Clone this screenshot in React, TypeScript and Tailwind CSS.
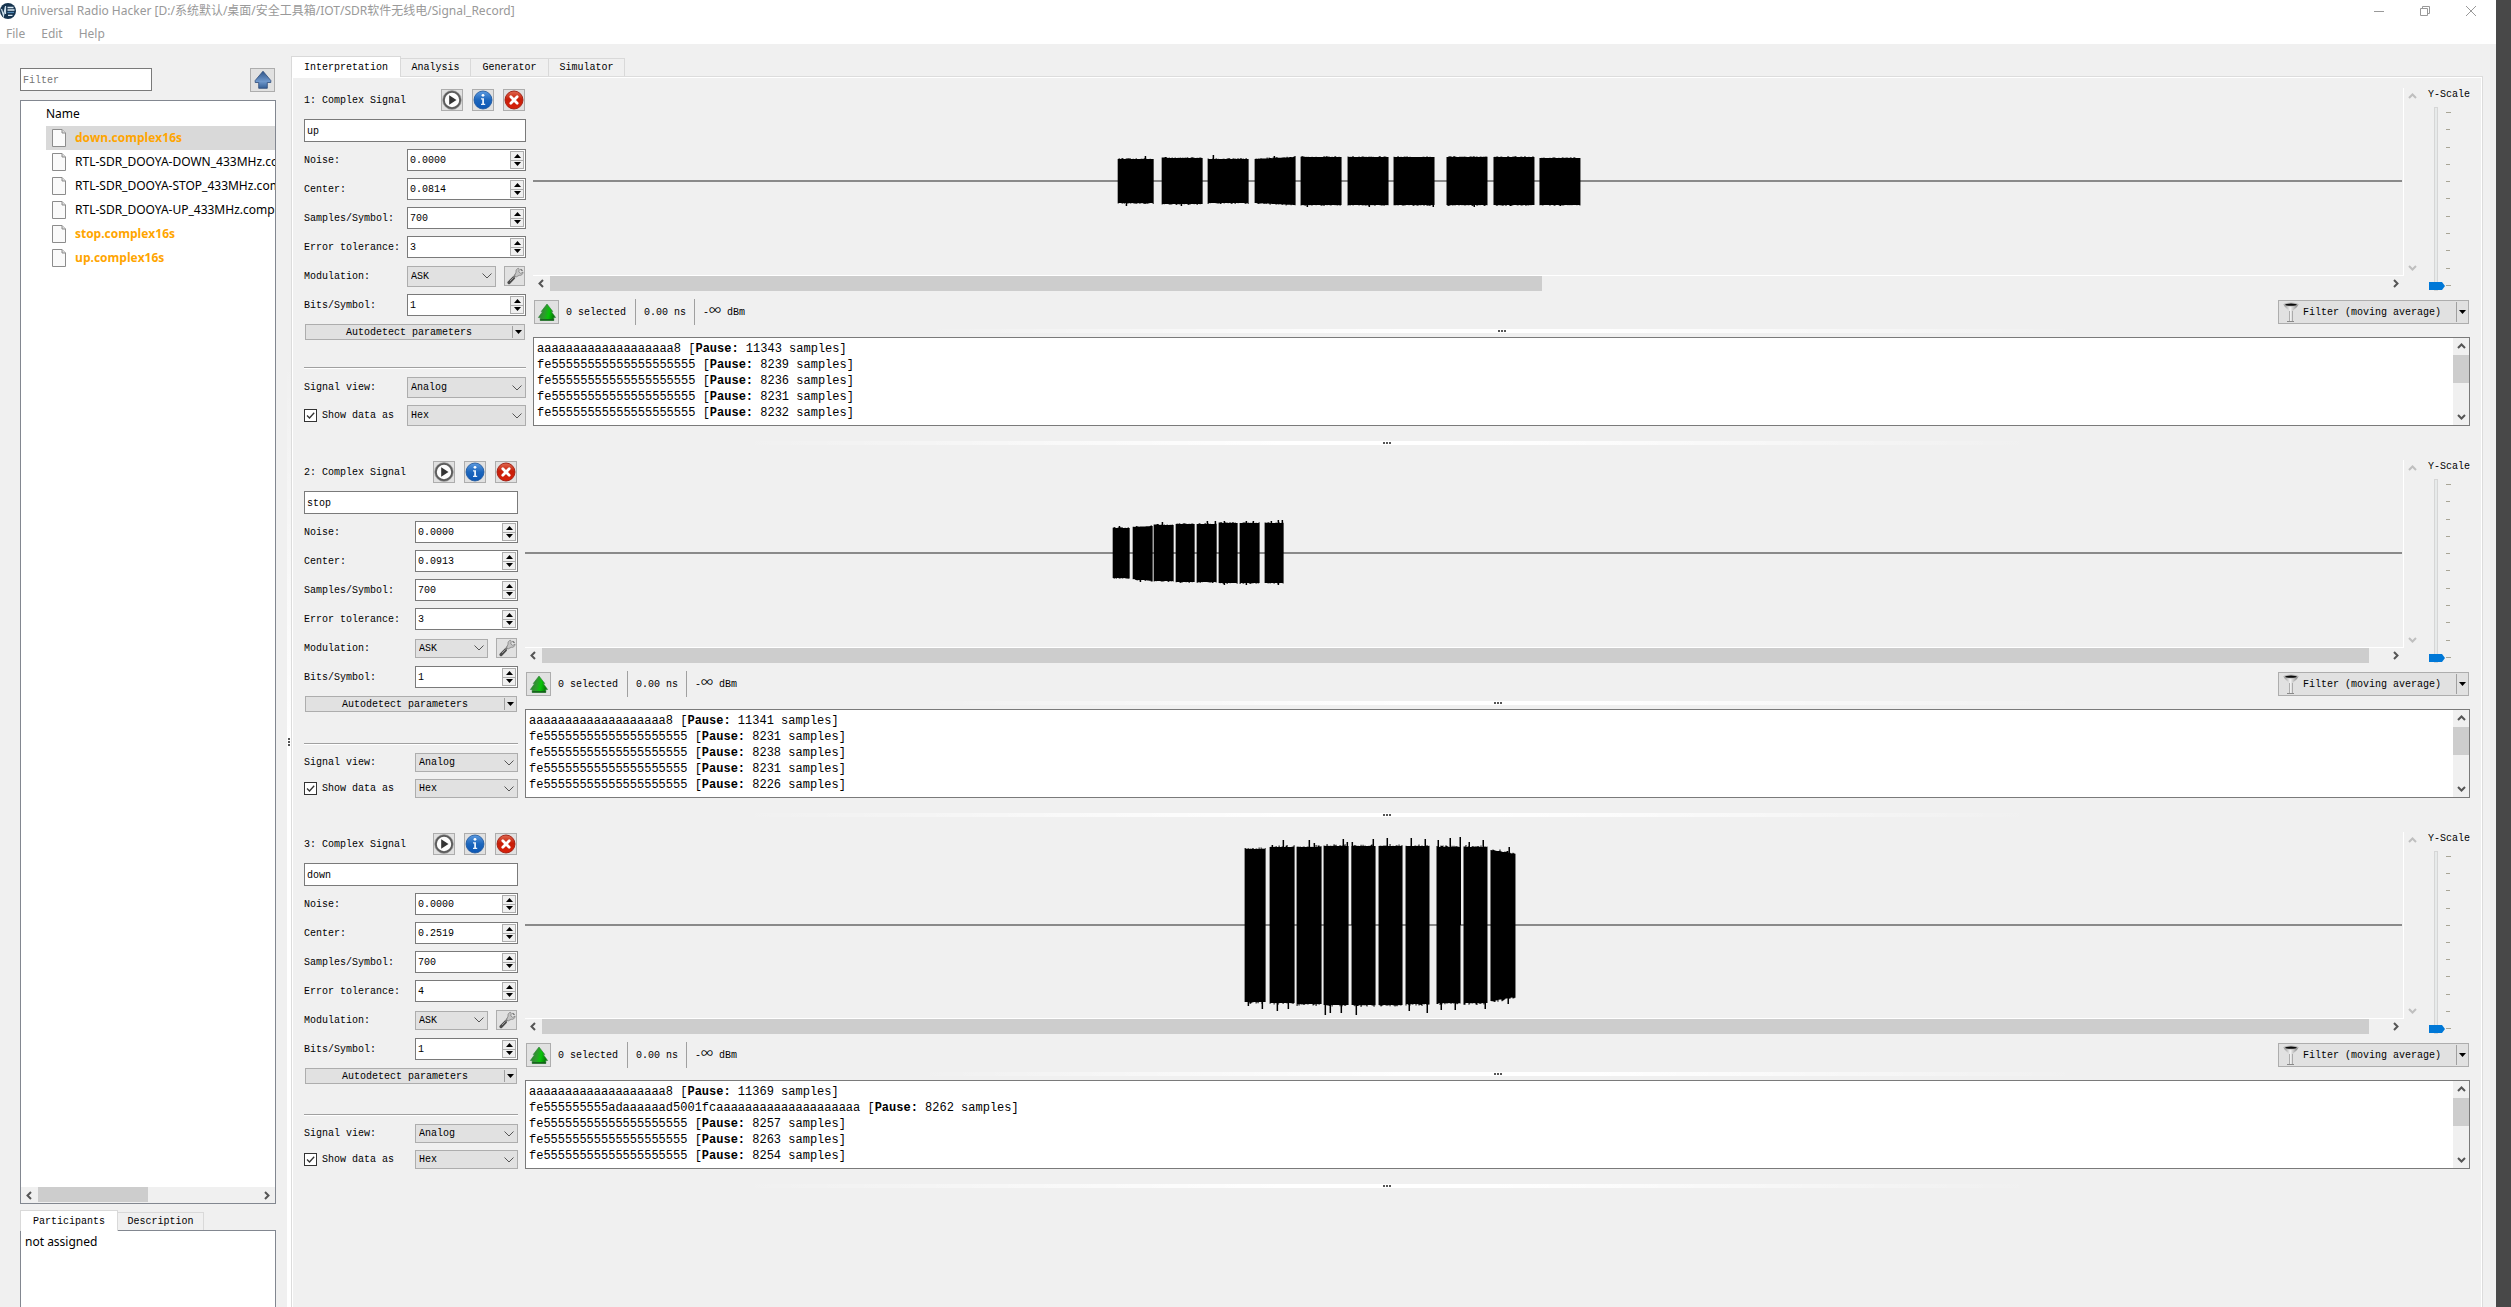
import React, { useId } from "react";

type Burst = [x0: number, x1: number, top: number, bottom: number, topEnd?: number, bottomEnd?: number];
type Spike = [x: number, y: number];

interface Signal {
  index: number;
  name: string;
  center: string;
  tolerance: string;
  roomy: boolean;
  graphWidth: number;
  tall: boolean;
  thumb: number;
  lines: [data: string, pause: number][];
  bursts: Burst[];
  spikes: Spike[];
  jitter: number;
}

const FIVES = "fe55555555555555555555";
const PREAMBLE = "aaaaaaaaaaaaaaaaaaa8";

const signals: Signal[] = [
  {
    index: 1,
    name: "up",
    center: "0.0814",
    tolerance: "3",
    roomy: true,
    graphWidth: 1871,
    tall: true,
    thumb: 54,
    lines: [[PREAMBLE, 11343], [FIVES, 8239], [FIVES, 8236], [FIVES, 8231], [FIVES, 8232]],
    bursts: [
      [585, 621, 71, 115], [629, 670, 70, 116], [675, 716, 71, 115], [722, 763, 71, 115, 69, 117],
      [768, 809, 69, 117], [815, 856, 69, 117], [861, 902, 69, 117], [914, 955, 69, 117],
      [961, 1002, 69, 117], [1007, 1048, 70, 117],
    ],
    spikes: [[612, 68], [680, 67], [593, 118], [648, 118], [741, 68], [774, 119], [836, 119], [900, 119], [941, 119], [1027, 118]],
    jitter: 1,
  },
  {
    index: 2,
    name: "stop",
    center: "0.0913",
    tolerance: "3",
    roomy: false,
    graphWidth: 1879,
    tall: true,
    thumb: 99,
    lines: [[PREAMBLE, 11341], [FIVES, 8231], [FIVES, 8238], [FIVES, 8231], [FIVES, 8226]],
    bursts: [
      [588, 605, 68, 118], [608, 628, 67, 119, 66, 121], [629, 649, 65, 121], [651, 670, 64, 122],
      [672, 692, 64, 122], [694, 713, 63, 123], [715, 735, 63, 123], [740, 759, 63, 123],
    ],
    spikes: [[594, 66], [637, 62], [682, 61], [690, 61], [699, 61], [721, 61], [728, 61], [746, 61], [753, 60], [757, 60], [615, 122], [699, 125], [721, 125], [753, 125]],
    jitter: 1,
  },
  {
    index: 3,
    name: "down",
    center: "0.2519",
    tolerance: "4",
    roomy: false,
    graphWidth: 1879,
    tall: false,
    thumb: 99,
    lines: [
      [PREAMBLE, 11369],
      ["fe555555555adaaaaaad5001fcaaaaaaaaaaaaaaaaaaaa", 8262],
      [FIVES, 8257],
      [FIVES, 8263],
      [FIVES, 8254],
    ],
    bursts: [
      [720, 741, 17, 170], [745, 770, 15, 171], [772, 797, 15, 172], [799, 824, 14, 173],
      [827, 851, 14, 173], [854, 878, 14, 173], [881, 905, 14, 172], [912, 936, 15, 171],
      [939, 963, 15, 171], [966, 991, 18, 169, 22, 165],
    ],
    spikes: [
      [758, 8], [747, 13], [784, 8], [789, 11], [818, 7], [822, 10], [827, 10], [848, 7], [862, 6], [886, 6],
      [900, 7], [913, 8], [925, 6], [935, 5], [944, 10], [958, 8], [984, 15], [723, 174], [737, 177], [752, 179],
      [763, 177], [800, 183], [805, 181], [816, 181], [831, 183], [884, 179], [902, 181], [916, 178], [930, 178],
      [960, 177], [983, 172],
    ],
    jitter: 2,
  },
];

function noise(n: number) {
  const v = Math.sin(n * 12.9898) * 43758.5453;
  return v - Math.floor(v);
}

function burstPath([x0, x1, top, bottom, topEnd = top, bottomEnd = bottom]: Burst, jitter: number) {
  const up: string[] = [];
  const down: string[] = [];
  for (let x = x0; x < x1; x++) {
    const t = (x - x0) / (x1 - x0);
    const yt = top + (topEnd - top) * t - Math.pow(noise(x), 3) * jitter;
    const yb = bottom + (bottomEnd - bottom) * t + Math.pow(noise(x + 500), 3) * jitter;
    up.push(`L${x} ${yt.toFixed(1)}H${x + 1}`);
    down.unshift(`L${x + 1} ${yb.toFixed(1)}H${x}`);
  }
  return `M${x0} 93${up.join("")}${down.join("")}Z`;
}

function Waveform({ s }: { s: Signal }) {
  const h = s.tall ? 187 : 186;
  return (
    <svg
      className={`block w-full ${s.tall ? "h-[187px]" : "h-[186px]"}`}
      viewBox={`0 0 ${s.graphWidth} ${h}`}
      preserveAspectRatio="none"
      role="img"
      aria-label={`Waveform of ${s.name}`}
    >
      <rect x="0" y="92" width={s.graphWidth - 1} height="2" fill="#8a8a8a" />
      {s.bursts.map((b) => (
        <path key={b[0]} d={burstPath(b, s.jitter)} fill="#000" />
      ))}
      {s.spikes.map(([x, y]) => (
        <rect key={`${x}-${y}`} x={x} y={Math.min(y, 93)} width="1.500" height={Math.abs(93 - y)} fill="#000" />
      ))}
    </svg>
  );
}

function Chevron({ dir, className = "" }: { dir: "up" | "down" | "left" | "right"; className?: string }) {
  const d = { up: "M1 6l3.500-3.500L8 6", down: "M1 3l3.500 3.500L8 3", left: "M6 1L2.500 4.500L6 8", right: "M3 1l3.500 3.500L3 8" }[dir];
  return (
    <svg className={`h-[9px] w-[9px] shrink-0 ${className}`} viewBox="0 0 9 9" fill="none" stroke="currentColor" strokeWidth="2">
      <path d={d} />
    </svg>
  );
}

function Triangle({ up = false }: { up?: boolean }) {
  return (
    <svg className="h-1 w-[7px] shrink-0" viewBox="0 0 7 4">
      <path d={up ? "M0 4L3.500 0L7 4Z" : "M0 0L3.500 4L7 0Z"} fill="#000" />
    </svg>
  );
}

function PlayIcon() {
  return (
    <svg className="h-5 w-5" viewBox="0 0 20 20">
      <circle cx="10" cy="10" r="8.300" fill="#fdfdfd" stroke="#5c5c5c" strokeWidth="2.200" />
      <circle cx="10" cy="10" r="9.500" fill="none" stroke="#a8a8a8" strokeWidth="0.600" />
      <path d="M7.200 5.200L14.500 10L7.200 14.800Z" fill="#333" />
    </svg>
  );
}

function InfoIcon() {
  const id = useId();
  return (
    <svg className="h-5 w-5" viewBox="0 0 20 20">
      <defs>
        <linearGradient id={id} x1="0" y1="0" x2="0" y2="1">
          <stop offset="0" stopColor="#5d9be0" />
          <stop offset="0.500" stopColor="#1c66bd" />
          <stop offset="1" stopColor="#0c57b5" />
        </linearGradient>
      </defs>
      <circle cx="10" cy="10" r="9" fill={`url(#${id})`} stroke="#1a549c" strokeWidth="0.800" />
      <circle cx="10" cy="5.300" r="1.400" fill="#fff" />
      <path d="M8 8.200h3v5.600h1.200v1.200H8v-1.200h1.200V9.400H8z" fill="#e8f1fc" />
    </svg>
  );
}

function CloseIcon() {
  const id = useId();
  return (
    <svg className="h-5 w-5" viewBox="0 0 20 20">
      <defs>
        <linearGradient id={id} x1="0" y1="0" x2="0" y2="1">
          <stop offset="0" stopColor="#df6a52" />
          <stop offset="0.450" stopColor="#c81e08" />
          <stop offset="1" stopColor="#d9200a" />
        </linearGradient>
      </defs>
      <circle cx="10" cy="10" r="9" fill={`url(#${id})`} stroke="#a01c10" strokeWidth="0.900" />
      <path d="M6.800 6.800L13.200 13.200M13.200 6.800L6.800 13.200" stroke="#fff" strokeWidth="2.800" strokeLinecap="round" />
    </svg>
  );
}

function WrenchIcon() {
  return (
    <svg className="h-[18px] w-[18px]" viewBox="0 0 18 18">
      <path d="M7.500 11L3 15.600" stroke="#4d4d4d" strokeWidth="3.200" strokeLinecap="round" />
      <path d="M7.500 10.500L4 14" stroke="#9a9a9a" strokeWidth="1" />
      <path d="M10 7.500L7.500 10.500" stroke="#777" strokeWidth="2" />
      <path d="M12.600 1.300c-2 .3-3 2-2.500 3.800L8.600 8.400l1.600 1.500 3-1.600c1.900.5 3.700-.8 3.900-3.200l-2.300 1.300-2-1.500.4-2.300z" fill="#c4c4c4" stroke="#808080" strokeWidth="0.800" />
      <path d="M14.500 2.200l2 1.600" stroke="#666" strokeWidth="1.200" />
    </svg>
  );
}

function TreeArrowIcon() {
  const id = useId();
  return (
    <svg className="h-5 w-5" viewBox="0 0 20 20">
      <defs>
        <linearGradient id={id} x1="0" y1="0" x2="1" y2="0.200">
          <stop offset="0" stopColor="#2f7d2f" />
          <stop offset="0.450" stopColor="#2e9a2e" />
          <stop offset="0.700" stopColor="#07c507" />
          <stop offset="1" stopColor="#0a7a0a" />
        </linearGradient>
      </defs>
      <path d="M10 2L15.800 9.500H14.300L18.600 15.500H16.800V18.500H3.200V15.500H1.400L5.700 9.500H4.200Z" fill={`url(#${id})`} stroke="#2c7a35" strokeWidth="0.600" />
      <path d="M3.200 17.800H16.800" stroke="#165c1c" strokeWidth="1.300" />
    </svg>
  );
}

function FunnelIcon() {
  const id = useId();
  return (
    <svg className="h-5 w-4 shrink-0" viewBox="0 0 16 20">
      <defs>
        <linearGradient id={id} x1="0" y1="0" x2="1" y2="0">
          <stop offset="0" stopColor="#8c8c8c" />
          <stop offset="0.450" stopColor="#f4f4f4" />
          <stop offset="1" stopColor="#7c7c7c" />
        </linearGradient>
      </defs>
      <path d="M0.500 2.500C2 6.500 6.300 7.500 6.300 10V19.300H9.700V10C9.700 7.500 14 6.500 15.500 2.500Z" fill={`url(#${id})`} />
      <path d="M6.500 9V19M9.500 9V19" stroke="#a0a0a0" strokeWidth="0.800" />
      <ellipse cx="8" cy="2.500" rx="7.500" ry="1.900" fill="#b5b5b5" />
      <ellipse cx="8" cy="2.700" rx="5.800" ry="1.100" fill="#0a0a0a" />
      <path d="M4 19.500H11" stroke="#8a8a8a" />
    </svg>
  );
}

function UpArrowIcon() {
  const id = useId();
  return (
    <svg className="h-5 w-5" viewBox="0 0 20 20">
      <defs>
        <linearGradient id={id} x1="0" y1="0" x2="0" y2="1">
          <stop offset="0" stopColor="#2d5488" />
          <stop offset="0.600" stopColor="#6f98cc" />
          <stop offset="1" stopColor="#345f96" />
        </linearGradient>
      </defs>
      <path d="M10 1.200L17.800 10.500V12.500H14.300V18.300H5.700V12.500H2.200V10.500Z" fill={`url(#${id})`} stroke="#2c4a78" strokeWidth="0.800" />
    </svg>
  );
}

function FileIcon() {
  return (
    <svg className="h-[18px] w-[14px] shrink-0" viewBox="0 0 14 18">
      <path d="M0.500 0.500H10L13.500 4V17.500H0.500Z" fill="#fafafa" stroke="#8c8c8c" />
      <path d="M10 0.500V4H13.500" fill="#ddd" stroke="#8c8c8c" />
    </svg>
  );
}

function AppLogo() {
  return (
    <svg className="h-4 w-4 shrink-0" viewBox="0 0 16 16">
      <circle cx="8" cy="8" r="8" fill="#16344f" />
      <path d="M1.500 6L3.500 12.500L5.500 3V11" fill="none" stroke="#cfe0ec" strokeWidth="1.200" />
      <path d="M7.500 4.500H13.500M7.500 7H14.500M8 12.300H12.500" stroke="#dbe8f2" strokeWidth="1.300" />
      <path d="M7.500 9.500H14" stroke="#4f86b4" strokeWidth="1.200" />
    </svg>
  );
}

function IconButton({ label, className, children }: { label: string; className: string; children: React.ReactNode }) {
  return (
    <button type="button" aria-label={label} className={`flex shrink-0 items-center justify-center border border-[#adadad] bg-[#e1e1e1] ${className}`}>
      {children}
    </button>
  );
}

function Handle() {
  return (
    <div className="flex h-1 w-full items-center justify-center gap-px bg-[linear-gradient(90deg,transparent_20%,white_45%,white_55%,transparent_80%)]">
      <i className="size-0.5 bg-[#555]" />
      <i className="size-0.5 bg-[#555]" />
      <i className="size-0.5 bg-[#555]" />
    </div>
  );
}

function SpinRow({ id, label, value, field }: { id: string; label: string; value: string; field: string }) {
  return (
    <div className="flex h-[22px] items-center justify-between">
      <label htmlFor={id}>{label}</label>
      <div className={`flex h-full border border-[#7a7a7a] bg-white p-px ${field}`}>
        <input id={id} defaultValue={value} className="min-w-0 flex-1 bg-transparent px-px outline-none" />
        <div className="flex w-3.5 flex-col">
          <button type="button" aria-label={`Increase ${label}`} className="flex flex-1 items-center justify-center border border-[#adadad] bg-[#f0f0f0]">
            <Triangle up />
          </button>
          <button type="button" aria-label={`Decrease ${label}`} className="-mt-px flex flex-1 items-center justify-center border border-[#adadad] bg-[#f0f0f0]">
            <Triangle />
          </button>
        </div>
      </div>
    </div>
  );
}

function Select({ id, value, options, className }: { id: string; value: string; options: string[]; className: string }) {
  return (
    <div className={`relative ${className}`}>
      <select id={id} defaultValue={value} className="block h-full w-full appearance-none border border-[#adadad] bg-[#e1e1e1] pl-[3px] outline-none">
        {options.map((o) => (
          <option key={o}>{o}</option>
        ))}
      </select>
      <svg className="pointer-events-none absolute right-1 top-1/2 h-[6px] w-[10px] -translate-y-1/2" viewBox="0 0 10 6" fill="none" stroke="#555">
        <path d="M0.500 0.500L5 5L9.500 0.500" />
      </svg>
    </div>
  );
}

function Controls({ s }: { s: Signal }) {
  const field = s.roomy ? "w-[119px]" : "w-[103px]";
  const selectH = s.roomy ? "h-[21px]" : "h-[19px]";
  const id = (k: string) => `signal-${s.index}-${k}`;
  return (
    <div className={`flex shrink-0 flex-col pt-px ${s.roomy ? "w-[222px]" : "w-[214px]"}`}>
      <div className="flex h-[22px] items-center pr-px">
        <span className="flex-1">{s.index}: Complex Signal</span>
        <div className="flex gap-[9px]">
          <IconButton label="Play signal" className="size-[22px]"><PlayIcon /></IconButton>
          <IconButton label="Signal details" className="size-[22px]"><InfoIcon /></IconButton>
          <IconButton label="Close signal" className="size-[22px]"><CloseIcon /></IconButton>
        </div>
      </div>
      <input aria-label="Signal name" defaultValue={s.name} className="mt-2 h-[23px] w-full border border-[#7a7a7a] bg-white px-0.5 pt-0.5 outline-none" />
      <div className="mt-[7px] flex flex-col gap-[7px]">
        <SpinRow id={id("noise")} label="Noise:" value="0.0000" field={field} />
        <SpinRow id={id("center")} label="Center:" value={s.center} field={field} />
        <SpinRow id={id("samples")} label="Samples/Symbol:" value="700" field={field} />
        <SpinRow id={id("tolerance")} label="Error tolerance:" value={s.tolerance} field={field} />
        <div className="flex h-[22px] items-center justify-between">
          <label htmlFor={id("mod")}>Modulation:</label>
          <div className={`flex items-center justify-between pr-px ${field}`}>
            <Select id={id("mod")} value="ASK" options={["ASK", "FSK", "PSK"]} className={`${selectH} ${s.roomy ? "w-[89px]" : "w-[73px]"}`} />
            <IconButton label="Modulation settings" className="h-5 w-[21px]"><WrenchIcon /></IconButton>
          </div>
        </div>
        <SpinRow id={id("bits")} label="Bits/Symbol:" value="1" field={field} />
      </div>
      <div className="mx-px mt-2 flex h-4 border border-[#adadad] bg-[#e1e1e1]">
        <button type="button" className="flex flex-1 items-center justify-center">Autodetect parameters</button>
        <button type="button" aria-label="Autodetect options" className="my-px flex w-3 items-center justify-center border-l border-[#a0a0a0]"><Triangle /></button>
      </div>
      <div className="flex-1" />
      <div className="h-0.5 border-t border-[#a0a0a0] bg-white" />
      <div className="mt-2 flex flex-col gap-[7px]">
        <div className="flex items-center justify-between">
          <label htmlFor={id("view")}>Signal view:</label>
          <Select id={id("view")} value="Analog" options={["Analog", "Demodulated", "Spectrogram"]} className={`${selectH} ${field}`} />
        </div>
        <div className="flex items-center justify-between">
          <label className="relative flex items-center gap-[5px]">
            <input type="checkbox" defaultChecked className="peer size-[13px] appearance-none border border-[#333] bg-white" />
            <svg className="pointer-events-none absolute left-0 hidden size-[13px] peer-checked:block" viewBox="0 0 13 13" fill="none" stroke="#333" strokeWidth="1.300">
              <path d="M3 6.500L5.500 9L10.200 3.800" />
            </svg>
            Show data as
          </label>
          <Select id={id("format")} value="Hex" options={["Bit", "Hex", "ASCII"]} className={`${selectH} ${field}`} />
        </div>
      </div>
    </div>
  );
}

function YScale({ id }: { id: string }) {
  return (
    <div className="flex w-[42px] shrink-0 flex-col">
      <label htmlFor={id} className="mt-px whitespace-nowrap leading-3">Y-Scale</label>
      <div className="relative mt-[6px] flex flex-1">
        <div className="ml-[6px] w-1 border border-[#d6d6d6] bg-[#e7eaea]" />
        <div className="my-[5px] ml-2 flex flex-col justify-between">
          {Array.from({ length: 11 }, (_, i) => (
            <i key={i} className={`h-px bg-[#a8a596] ${i === 0 || i === 10 ? "w-[5px]" : "w-1"}`} />
          ))}
        </div>
        <svg className="absolute bottom-[1px] left-px h-2 w-4" viewBox="0 0 16 8">
          <path d="M0 0H13L16 4L13 8H0Z" fill="#0078d7" />
        </svg>
        <input id={id} type="range" defaultValue={0} className="absolute inset-0 h-full w-full opacity-0 [direction:rtl] [writing-mode:vertical-lr]" />
      </div>
    </div>
  );
}

function SignalFrame({ s }: { s: Signal }) {
  return (
    <section aria-label={`Signal ${s.name}`}>
      <div className="flex gap-[7px]">
        <Controls s={s} />
        <div className="flex min-w-0 flex-1 flex-col">
          <div className="flex">
            <div className="flex min-w-0 flex-1 flex-col">
              <div className="border-b border-r border-white">
                <Waveform s={s} />
              </div>
              <div className="flex h-[15px] items-center text-[#555]">
                <button type="button" aria-label="Scroll left" className="flex w-[17px] justify-center"><Chevron dir="left" /></button>
                <div className="h-full flex-1">
                  <div className="h-full bg-[#cdcdcd]" style={{ width: `${s.thumb}%` }} />
                </div>
                <button type="button" aria-label="Scroll right" className="flex w-[17px] justify-center"><Chevron dir="right" /></button>
              </div>
            </div>
            <div className="mb-[15px] mr-2 flex w-4 flex-col items-center justify-between py-1 text-[#bfbfbf]">
              <Chevron dir="up" />
              <Chevron dir="down" />
            </div>
            <YScale id={`signal-${s.index}-yscale`} />
          </div>
          <div className="mt-[9px] flex h-6 items-center pr-px">
            <IconButton label="Show selection" className="ml-px h-6 w-[25px]"><TreeArrowIcon /></IconButton>
            <span className="ml-[7px] w-[69px]">0 selected</span>
            <span className="flex h-[26px] w-[59px] items-center border-l border-[#a0a0a0] pl-2">0.00 ns</span>
            <span className="flex h-[26px] items-center border-l border-[#a0a0a0] pl-2">
              <span className="whitespace-pre">
                -<span className="font-['Noto_Sans_CJK_SC',sans-serif] text-[12px] leading-3">∞</span> dBm
              </span>
            </span>
            <div className="flex-1" />
            <div className="flex h-6 w-[191px] border border-[#adadad] bg-[#e1e1e1]">
              <button type="button" className="flex flex-1 items-center gap-1 whitespace-nowrap pl-1">
                <FunnelIcon />
                Filter (moving average)
              </button>
              <button type="button" aria-label="Filter options" className="my-px flex w-3 items-center justify-center border-l border-[#a0a0a0]"><Triangle /></button>
            </div>
          </div>
          <div className="mb-1 mt-[5px]"><Handle /></div>
          <div className="flex border border-[#7a7a7a] bg-white">
            <div className="min-w-0 flex-1 px-[3px] pb-1 pt-[3px] text-[12px] leading-4">
              {s.lines.map(([data, pause], i) => (
                <p key={i} className="whitespace-nowrap">
                  {data} [<b>Pause:</b> {pause} samples]
                </p>
              ))}
            </div>
            <div className="flex w-4 flex-col items-center bg-[#f0f0f0] text-[#555]">
              <Chevron dir="up" className="my-1" />
              <div className="h-7 w-full bg-[#cdcdcd]" />
              <div className="flex-1" />
              <Chevron dir="down" className="my-1" />
            </div>
          </div>
        </div>
      </div>
      <div className="py-[15px]"><Handle /></div>
    </section>
  );
}

function Tabs({ names, sizes }: { names: string[]; sizes: string[] }) {
  return (
    <div role="tablist" className="flex items-end">
      {names.map((n, i) => (
        <button
          key={n}
          type="button"
          role="tab"
          aria-selected={i === 0}
          className={`flex items-center justify-center border-[#d9d9d9] ${
            i === 0 ? "z-10 -mb-px h-[21px] border border-b-0 bg-white" : "h-[18px] border-r border-t"
          } ${sizes[i]}`}
        >
          {n}
        </button>
      ))}
    </div>
  );
}

const files = [
  { name: "down.complex16s", own: true, selected: true },
  { name: "RTL-SDR_DOOYA-DOWN_433MHz.complex", own: false },
  { name: "RTL-SDR_DOOYA-STOP_433MHz.complex", own: false },
  { name: "RTL-SDR_DOOYA-UP_433MHz.complex", own: false },
  { name: "stop.complex16s", own: true },
  { name: "up.complex16s", own: true },
];

const UI_FONT = "font-['Noto_Sans','Noto_Sans_CJK_SC',sans-serif] text-[12px]";

function Sidebar() {
  return (
    <aside className="flex w-[276px] shrink-0 flex-col pl-5 pt-6">
      <div className="flex h-6 items-start justify-between pr-px">
        <input aria-label="Filter" placeholder="Filter" className="h-[23px] w-[132px] border border-[#7a7a7a] bg-white px-0.5 pt-0.5 outline-none placeholder:text-[#757575]" />
        <IconButton label="Parent folder" className="h-6 w-[25px]"><UpArrowIcon /></IconButton>
      </div>
      <div className={`mt-2 flex min-h-0 flex-1 flex-col border border-[#828790] bg-white ${UI_FONT}`}>
        <div className="flex h-[25px] items-center pl-[25px] pt-px">Name</div>
        <ul className="flex-1 overflow-hidden pl-[25px]">
          {files.map((f) => (
            <li key={f.name}>
              <button
                type="button"
                className={`flex h-6 w-full items-center gap-[9px] overflow-hidden whitespace-nowrap pl-[6px] text-left ${f.selected ? "bg-[#d9d9d9]" : ""} ${
                  f.own ? "font-['Open_Sans',sans-serif] font-bold text-[#ffa500]" : "text-black"
                }`}
              >
                <FileIcon />
                <span className="min-w-0 flex-1 overflow-hidden">{f.name}</span>
              </button>
            </li>
          ))}
        </ul>
        <div className="flex h-4 items-center bg-[#f0f0f0] text-[#555]">
          <button type="button" aria-label="Scroll left" className="flex w-[17px] justify-center"><Chevron dir="left" /></button>
          <div className="h-full flex-1"><div className="h-[15px] w-1/2 bg-[#cdcdcd]" /></div>
          <button type="button" aria-label="Scroll right" className="flex w-[17px] justify-center"><Chevron dir="right" /></button>
        </div>
      </div>
      <div className="mt-[6px]">
        <Tabs names={["Participants", "Description"]} sizes={["w-[98px]", "w-[86px]"]} />
      </div>
      <div className={`h-[77px] border border-b-0 border-[#828790] bg-white px-1 pt-0.5 ${UI_FONT}`}>not assigned</div>
    </aside>
  );
}

export default function App() {
  return (
    <div className="flex h-screen overflow-hidden bg-[#484848] pr-[15px] font-['Liberation_Mono','Noto_Sans_CJK_SC',monospace] text-[10px] text-black">
      <div className="flex min-w-0 flex-1 flex-col bg-[#f0f0f0]">
        <header className={`h-11 shrink-0 bg-white text-[#999] ${UI_FONT}`}>
          <div className="flex h-[22px] items-center">
            <AppLogo />
            <h1 className="ml-[5px] flex-1">Universal Radio Hacker [D:/系统默认/桌面/安全工具箱/IOT/SDR软件无线电/Signal_Record]</h1>
            <div className="flex gap-9 pr-5">
              <button type="button" aria-label="Minimize">
                <svg className="size-[10px]" viewBox="0 0 10 10" stroke="#999"><path d="M0 5.500H10" /></svg>
              </button>
              <button type="button" aria-label="Restore">
                <svg className="size-[10px]" viewBox="0 0 10 10" fill="none" stroke="#999"><path d="M0.500 2.500H7.500V9.500H0.500ZM2.500 2.500V0.500H9.500V7.500H7.500" /></svg>
              </button>
              <button type="button" aria-label="Close">
                <svg className="size-[10px]" viewBox="0 0 10 10" stroke="#999"><path d="M0 0L10 10M10 0L0 10" /></svg>
              </button>
            </div>
          </div>
          <nav className="flex h-[22px] items-center gap-4 pl-[6px] pt-0.5">
            <button type="button">File</button>
            <button type="button">Edit</button>
            <button type="button">Help</button>
          </nav>
        </header>
        <div className="flex min-h-0 flex-1">
          <Sidebar />
          <div className="ml-[11px] flex w-1 shrink-0 flex-col items-center justify-center gap-px bg-[linear-gradient(180deg,transparent_25%,white_55%)] pt-[132px]">
            <i className="size-0.5 bg-[#555]" />
            <i className="size-0.5 bg-[#555]" />
            <i className="size-0.5 bg-[#555]" />
          </div>
          <main className="flex min-w-0 flex-1 flex-col pr-[13px] pt-3">
            <Tabs names={["Interpretation", "Analysis", "Generator", "Simulator"]} sizes={["w-[110px]", "w-[70px]", "w-[78px]", "w-[76px]"]} />
            <div className="flex-1 overflow-hidden border border-b-0 border-[#dcdcdc]">
              <div className="h-full border border-b-0 border-white px-[11px] pt-2.5">
                {signals.map((s) => (
                  <SignalFrame key={s.index} s={s} />
                ))}
              </div>
            </div>
          </main>
        </div>
      </div>
    </div>
  );
}
